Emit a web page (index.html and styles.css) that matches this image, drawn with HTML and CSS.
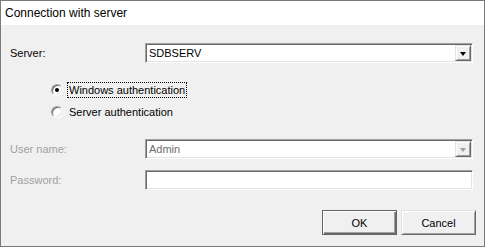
FILE: index.html
```html
<!DOCTYPE html>
<html lang="en">
<head>
    <meta charset="UTF-8">
    <meta name="viewport" content="width=device-width, initial-scale=1.0">
    <title>Connection with server</title>
    <link rel="stylesheet" href="styles.css">
</head>
<body>
    <div class="dialog">
        <div class="titlebar">Connection with server</div>

        <div class="content">
            <div class="field-row">
                <span class="field-label">Server:</span>
                <div class="combo">
                    <span class="combo-text">SDBSERV</span>
                    <span class="drop-button"><i class="arrow"></i></span>
                </div>
            </div>

            <div class="auth-group">
                <div class="radio-row">
                    <span class="radio checked"></span>
                    <span class="radio-label focused">Windows authentication</span>
                </div>
                <div class="radio-row">
                    <span class="radio"></span>
                    <span class="radio-label">Server authentication</span>
                </div>
            </div>

            <div class="field-row disabled user-row">
                <span class="field-label">User name:</span>
                <div class="combo">
                    <span class="combo-text">Admin</span>
                    <span class="drop-button"><i class="arrow"></i></span>
                </div>
            </div>

            <div class="field-row disabled password-row">
                <span class="field-label">Password:</span>
                <div class="combo"></div>
            </div>

            <div class="buttons">
                <button class="btn default">OK</button>
                <button class="btn">Cancel</button>
            </div>
        </div>
    </div>
</body>
</html>
```

FILE: styles.css
```css
body{
    margin:0;
    background-color:#f0f0f0;
    font-family:"Liberation Sans", Arial, sans-serif;
    font-size:11px;
    color:black;
}

.dialog{
    width:483px;
    height:245px;
    border:1px solid #7a7a7a;
    background-color:#f0f0f0;
    display:flex;
    flex-direction:column;
}

.titlebar{
    height:24px;
    line-height:24px;
    background-color:white;
    padding-left:4px;
    font-size:12px;
    color:#000;
}

.content{
    padding:18px 11px 0 9px;
    display:flex;
    flex-direction:column;
}

.field-row{
    display:grid;
    grid-template-columns:135px 1fr;
    align-items:center;
    height:20px;
}

.disabled .field-label{
    color:#a0a0a0;
}

.combo{
    height:20px;
    box-sizing:border-box;
    background-color:white;
    border:1px solid;
    border-color:#a0a0a0 #fff #fff #a0a0a0;
    box-shadow:inset 1px 1px 0 #696969, inset -1px -1px 0 #e3e3e3;
    display:flex;
    align-items:center;
    padding:1px 1px 1px 3px;
}

.combo-text{
    flex:1;
    line-height:16px;
}

.disabled .combo-text{
    color:#6d6d6d;
}

.drop-button{
    width:16px;
    height:16px;
    box-sizing:border-box;
    background-color:#f0f0f0;
    border:1px solid;
    border-color:#e3e3e3 #696969 #696969 #e3e3e3;
    box-shadow:inset 1px 1px 0 #fff, inset -1px -1px 0 #a0a0a0;
    display:flex;
    align-items:center;
    justify-content:center;
}

.arrow{
    width:0;
    height:0;
    border-left:3.5px solid transparent;
    border-right:3.5px solid transparent;
    border-top:4px solid black;
    margin-top:1px;
}

.disabled .arrow{
    border-top-color:#a0a0a0;
}

.auth-group{
    margin:19px 0 0 41px;
    display:flex;
    flex-direction:column;
    gap:6px;
}

.radio-row{
    display:flex;
    align-items:center;
    height:16px;
}

.radio{
    width:12px;
    height:12px;
    box-sizing:border-box;
    border-radius:50%;
    background-color:white;
    border:1px solid;
    border-color:#a0a0a0 #fff #fff #a0a0a0;
    box-shadow:inset 1px 1px 0 #696969, inset -1px -1px 0 #e3e3e3;
    display:flex;
    align-items:center;
    justify-content:center;
    margin-right:4px;
}

.radio.checked::after{
    content:"";
    width:4px;
    height:4px;
    border-radius:50%;
    background-color:black;
}

.radio-label{
    padding:0 1px;
    line-height:14px;
    border:1px solid transparent;
}

.radio-label.focused{
    border:1px dotted black;
}

.user-row{
    margin-top:19px;
}

.password-row{
    margin-top:11px;
}

.buttons{
    margin:20px -3px 0 0;
    display:flex;
    justify-content:flex-end;
    gap:4px;
}

.btn{
    width:75px;
    height:25px;
    font-family:"Liberation Sans", Arial, sans-serif;
    font-size:11px;
    color:black;
    background-color:#f0f0f0;
    border:1px solid;
    border-color:#e3e3e3 #696969 #696969 #e3e3e3;
    box-shadow:inset 1px 1px 0 #fff, inset -1px -1px 0 #a0a0a0;
    padding:0;
}

.btn.default{
    border-color:#646464;
    box-shadow:inset 1px 1px 0 #fff, inset -1px -1px 0 #696969, inset -2px -2px 0 #a0a0a0;
}
```
